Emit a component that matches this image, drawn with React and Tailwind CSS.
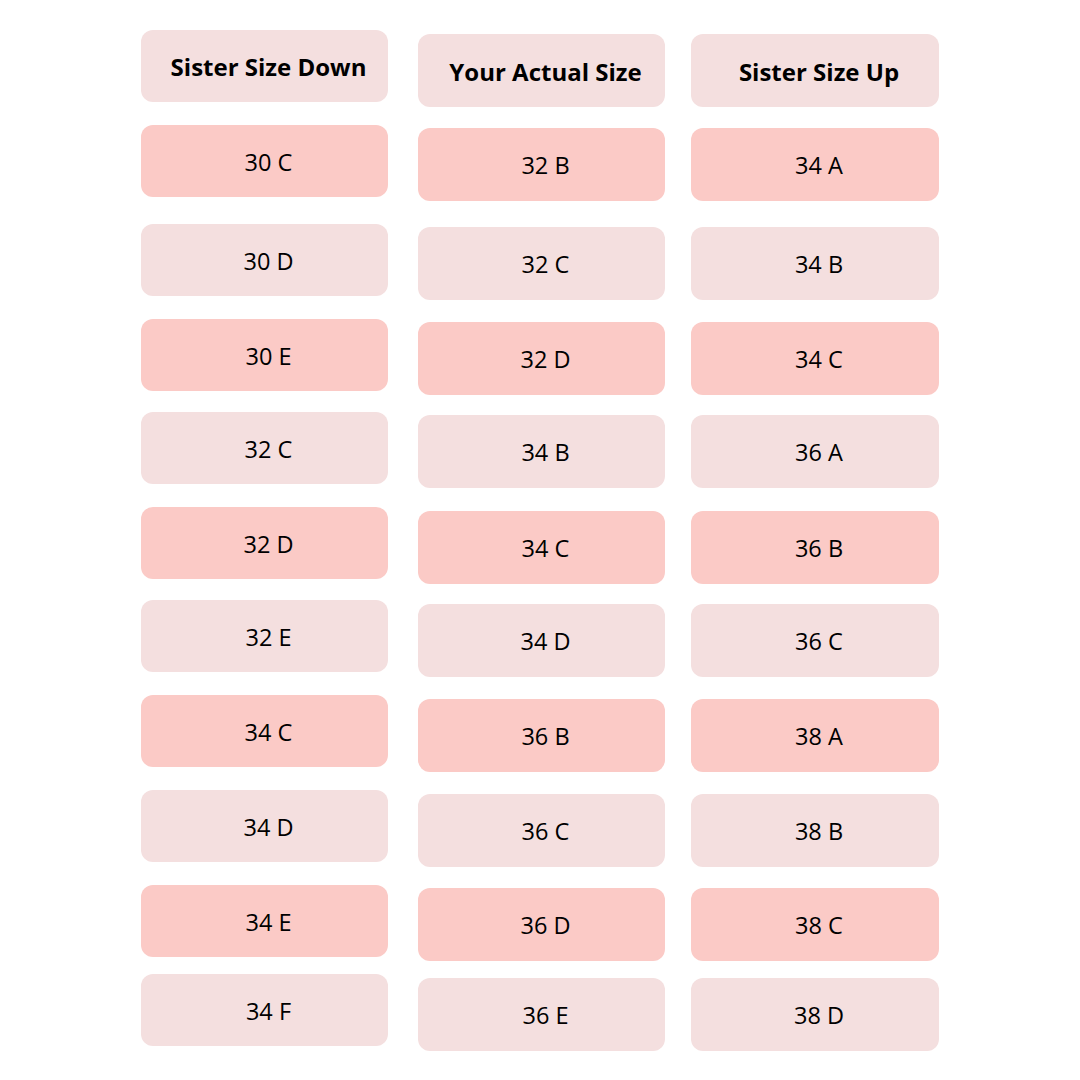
import React from 'react';

const light = 'bg-[#f4dfdf]';
const dark = 'bg-[#fbcac6]';

const columns = [
  {
    title: 'Sister Size Down',
    wrap: 'w-[247px] pt-[30px]',
    cell: 'h-[72px]',
    gaps: ['mt-[23px]', 'mt-[27px]', 'mt-[23px]', 'mt-[21px]', 'mt-[23px]', 'mt-[21px]', 'mt-[23px]', 'mt-[23px]', 'mt-[23px]', 'mt-[17px]'],
    sizes: ['30 C', '30 D', '30 E', '32 C', '32 D', '32 E', '34 C', '34 D', '34 E', '34 F'],
  },
  {
    title: 'Your Actual Size',
    wrap: 'w-[247px] pt-[34px] ml-[30px]',
    cell: 'h-[73px]',
    gaps: ['mt-[21px]', 'mt-[26px]', 'mt-[22px]', 'mt-[20px]', 'mt-[23px]', 'mt-[20px]', 'mt-[22px]', 'mt-[22px]', 'mt-[21px]', 'mt-[17px]'],
    sizes: ['32 B', '32 C', '32 D', '34 B', '34 C', '34 D', '36 B', '36 C', '36 D', '36 E'],
  },
  {
    title: 'Sister Size Up',
    wrap: 'w-[248px] pt-[34px] ml-[26px]',
    cell: 'h-[73px]',
    gaps: ['mt-[21px]', 'mt-[26px]', 'mt-[22px]', 'mt-[20px]', 'mt-[23px]', 'mt-[20px]', 'mt-[22px]', 'mt-[22px]', 'mt-[21px]', 'mt-[17px]'],
    sizes: ['34 A', '34 B', '34 C', '36 A', '36 B', '36 C', '38 A', '38 B', '38 C', '38 D'],
  },
];

const App = () => {
  return (
    <div
      className="w-[1080px] h-[1080px] bg-white flex pl-[141px] text-black"
      style={{ fontFamily: '"Open Sans", "Noto Sans", sans-serif' }}
    >
      {columns.map(col => (
        <div key={col.title} className={`flex flex-col ${col.wrap}`}>
          <div className={`${col.cell} rounded-[12px] ${light} flex items-center justify-center pl-2 pt-[2px] text-[24px] font-bold`}>
            {col.title}
          </div>
          {col.sizes.map((size, i) => (
            <div
              key={size}
              className={`${col.cell} rounded-[12px] ${i % 2 === 0 ? dark : light} ${col.gaps[i]} flex items-center justify-center pl-2 pt-[3px] text-[23.5px]`}
            >
              {size}
            </div>
          ))}
        </div>
      ))}
    </div>
  );
};

export default App;
